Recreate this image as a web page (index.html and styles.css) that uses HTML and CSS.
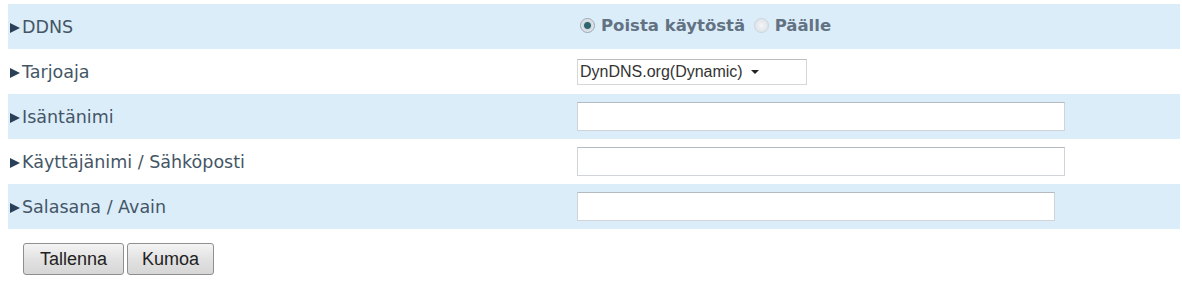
FILE: index.html
```html
<!DOCTYPE html>
<html lang="fi">
<head>
  <meta charset="UTF-8">
  <title>DDNS</title>
  <link rel="stylesheet" href="styles.css">
</head>
<body>
  <table class="settings">
    <tr class="odd">
      <td class="label"><span class="arrow"></span>DDNS</td>
      <td class="value">
        <label class="radio"><span class="dot checked"></span>Poista käytöstä</label>
        <label class="radio"><span class="dot"></span>Päälle</label>
      </td>
    </tr>
    <tr>
      <td class="label"><span class="arrow"></span>Tarjoaja</td>
      <td class="value">
        <div class="select">DynDNS.org(Dynamic)<span class="caret"></span></div>
      </td>
    </tr>
    <tr class="odd">
      <td class="label"><span class="arrow"></span>Isäntänimi</td>
      <td class="value"><input type="text" class="field"></td>
    </tr>
    <tr>
      <td class="label"><span class="arrow"></span>Käyttäjänimi / Sähköposti</td>
      <td class="value"><input type="text" class="field"></td>
    </tr>
    <tr class="odd">
      <td class="label"><span class="arrow"></span>Salasana / Avain</td>
      <td class="value"><input type="password" class="field short"></td>
    </tr>
  </table>
  <div class="buttons">
    <button type="button" class="save">Tallenna</button>
    <button type="button">Kumoa</button>
  </div>
</body>
</html>
```

FILE: styles.css
```css
body {
  margin: 0;
  padding: 4px 2px 0 8px;
  background: #fff;
  font-family: "DejaVu Sans", Verdana, sans-serif;
  font-size: 17.5px;
  color: #445666;
}
.settings {
  width: 100%;
  border-collapse: collapse;
}
.settings td {
  height: 45px;
  padding: 0;
  vertical-align: middle;
}
.settings tr.odd td {
  background-color: #dcedfa;
}
.label {
  width: 567px;
  padding-left: 2px !important;
}
.arrow {
  display: inline-block;
  width: 0;
  height: 0;
  border-top: 5px solid transparent;
  border-bottom: 5px solid transparent;
  border-left: 10px solid #2a3f58;
  margin-right: 2px;
}
.value {
  padding-top: 1px;
}
.radio {
  display: inline-flex;
  align-items: center;
  font-weight: bold;
  font-size: 16.5px;
  color: #627282;
}
.dot {
  width: 15px;
  height: 15px;
  border-radius: 50%;
  border: 1px solid #cdd4da;
  background: radial-gradient(circle, #f4f6f8 0, #dde3e8 7px);
  margin: 0 6px 0 3px;
  box-sizing: border-box;
  display: inline-block;
}
.dot.checked {
  border-color: #9aa6b2;
  background: radial-gradient(circle, #2e6670 0, #2e6670 3px, #cfd8df 4px, #e6ebef 7px);
}
.select {
  display: inline-flex;
  align-items: center;
  width: 230px;
  height: 26px;
  box-sizing: border-box;
  border: 1px solid #d6d6d6;
  border-top-color: #bdbdbd;
  background: #fff;
  padding-left: 2px;
  font-family: "Liberation Sans", Arial, sans-serif;
  font-size: 16px;
  color: #333;
}
.caret {
  margin-left: 8px;
  border-left: 4px solid transparent;
  border-right: 4px solid transparent;
  border-top: 4px solid #222;
}
.field {
  display: block;
  width: 488px;
  height: 29px;
  box-sizing: border-box;
  margin: 0;
  border: 1px solid #d0d4d8;
  border-top-color: #b4bac0;
  background: #fff;
}
.field.short {
  width: 478px;
}
.buttons {
  padding: 14px 0 0 15px;
  display: flex;
  gap: 3px;
}
.buttons button {
  height: 32px;
  padding: 0 14px;
  font-family: "Liberation Sans", Arial, sans-serif;
  font-size: 18px;
  color: #222;
  border: 1px solid #8e8f8f;
  border-radius: 3px;
  background: linear-gradient(#f4f4f4, #e2e2e2 50%, #d6d6d6);
}
.buttons .save {
  padding: 0 16px;
}
```
